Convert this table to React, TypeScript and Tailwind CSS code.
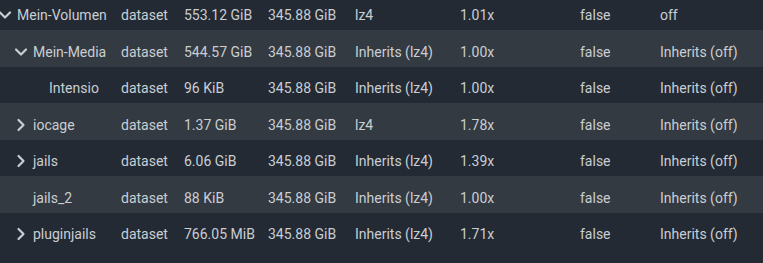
import { ChevronDown, ChevronRight } from "lucide-react";

type Row = {
  name: string;
  level: number;
  expand?: "open" | "closed";
  type: string;
  used: string;
  avail: string;
  comp: string;
  ratio: string;
  readonly: string;
  dedup: string;
};

const rows: Row[] = [
  { name: "Mein-Volumen", level: 0, expand: "open", type: "dataset", used: "553.12 GiB", avail: "345.88 GiB", comp: "lz4", ratio: "1.01x", readonly: "false", dedup: "off" },
  { name: "Mein-Media", level: 1, expand: "open", type: "dataset", used: "544.57 GiB", avail: "345.88 GiB", comp: "Inherits (lz4)", ratio: "1.00x", readonly: "false", dedup: "Inherits (off)" },
  { name: "Intensio", level: 2, type: "dataset", used: "96 KiB", avail: "345.88 GiB", comp: "Inherits (lz4)", ratio: "1.00x", readonly: "false", dedup: "Inherits (off)" },
  { name: "iocage", level: 1, expand: "closed", type: "dataset", used: "1.37 GiB", avail: "345.88 GiB", comp: "lz4", ratio: "1.78x", readonly: "false", dedup: "Inherits (off)" },
  { name: "jails", level: 1, expand: "closed", type: "dataset", used: "6.06 GiB", avail: "345.88 GiB", comp: "Inherits (lz4)", ratio: "1.39x", readonly: "false", dedup: "Inherits (off)" },
  { name: "jails_2", level: 1, type: "dataset", used: "88 KiB", avail: "345.88 GiB", comp: "Inherits (lz4)", ratio: "1.00x", readonly: "false", dedup: "Inherits (off)" },
  { name: "pluginjails", level: 1, expand: "closed", type: "dataset", used: "766.05 MiB", avail: "345.88 GiB", comp: "Inherits (lz4)", ratio: "1.71x", readonly: "false", dedup: "Inherits (off)" },
];

// 들여쓰기 단계별 왼쪽 여백
const indent = ["pl-0", "pl-[16px]", "pl-[32px]"];

export default function App() {
  return (
    <div
      className="h-[263px] w-full overflow-hidden bg-[#232a33] text-[14px] text-[#c9ced3]"
      style={{ fontFamily: "Roboto, 'Liberation Sans', sans-serif" }}
    >
      <div className="-mt-[6.5px]">
        {rows.map((r, i) => (
          <div
            key={r.name}
            className={
              "grid h-[36.5px] grid-cols-[121px_63px_84px_87px_105px_120px_80px_1fr] items-center whitespace-nowrap pt-[7px] leading-5 " +
              (i % 2 === 1 ? "bg-[#343a41]" : "")
            }
          >
            <div className={"flex items-center " + indent[r.level]}>
              <span className="-ml-[6.5px] flex w-[22px] shrink-0 items-center justify-center">
                {r.expand === "open" && <ChevronDown size={20} strokeWidth={2.6} />}
                {r.expand === "closed" && <ChevronRight size={20} strokeWidth={2.6} />}
              </span>
              <span className="ml-[1.5px]">{r.name}</span>
            </div>
            <div>{r.type}</div>
            <div>{r.used}</div>
            <div>{r.avail}</div>
            <div>{r.comp}</div>
            <div>{r.ratio}</div>
            <div>{r.readonly}</div>
            <div>{r.dedup}</div>
          </div>
        ))}
      </div>
    </div>
  );
}
